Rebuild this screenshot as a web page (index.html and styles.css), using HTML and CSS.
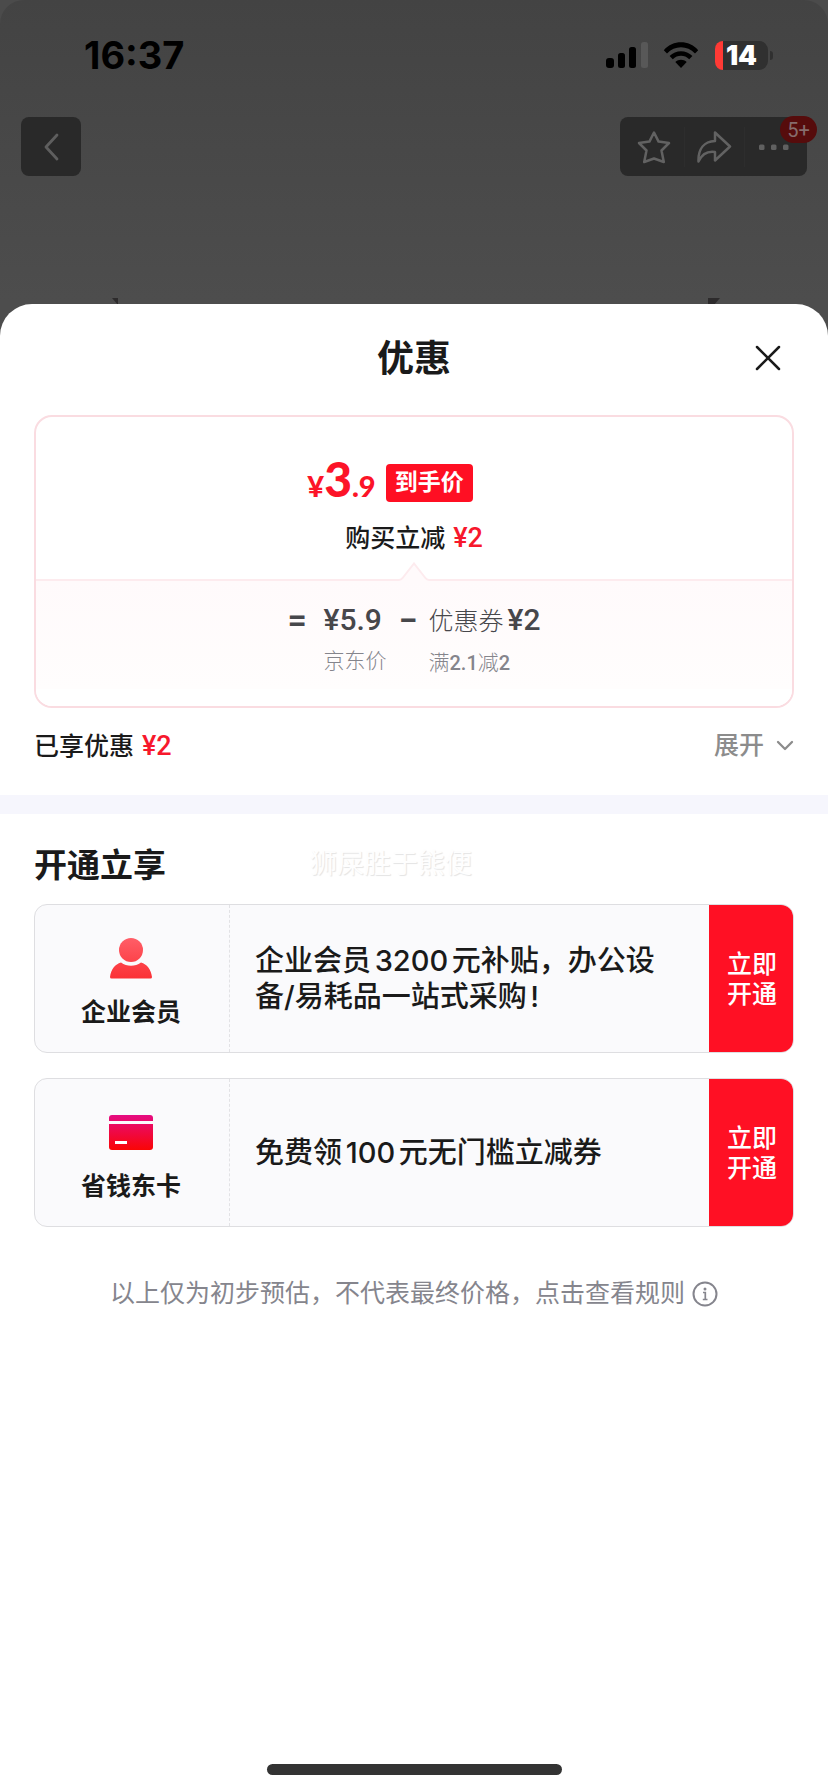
FILE: index.html
```html
<!DOCTYPE html>
<html lang="zh-CN">
<head>
<meta charset="utf-8">
<meta name="viewport" content="width=device-width, initial-scale=1">
<title>优惠</title>
<link rel="stylesheet" href="styles.css">
</head>
<body>
<div class="app">
  <header class="backdrop">
    <div class="status">
      <time class="clock">16:37</time>
      <div class="indicators">
        <svg class="signal" width="42" height="28" viewBox="0 0 42 28" aria-hidden="true">
          <rect x="0" y="17" width="8" height="10" rx="3"/>
          <rect x="12" y="12" width="7" height="15" rx="2.5"/>
          <rect x="23" y="6" width="7" height="21" rx="2.5"/>
          <rect x="35" y="1" width="7" height="26" rx="2.5" fill="#585858"/>
        </svg>
        <svg class="wifi" width="36" height="28" viewBox="0 0 36 28" aria-hidden="true">
          <path d="M0.800 9.200C10-1.400 26-1.400 35.200 9.200L32 12.400C24.400 4.200 11.600 4.200 4 12.400Z"/>
          <path d="M6.600 15C12.800 8.500 23.200 8.500 29.400 15L26.200 18.200C21.600 13.700 14.400 13.700 9.800 18.200Z"/>
          <path d="M12.300 21C15.500 18 20.500 18 23.700 21L18 27Z"/>
        </svg>
        <div class="battery"><span class="charge"></span><span class="level">14</span></div>
      </div>
    </div>
    <nav class="tools">
      <button class="back" aria-label="返回">
        <svg width="16" height="28" viewBox="0 0 16 28"><path d="M14 2 3 14 14 26" fill="none" stroke="#5e5e5e" stroke-width="2.800" stroke-linecap="round" stroke-linejoin="round"/></svg>
      </button>
      <div class="actions">
        <button aria-label="收藏">
          <svg width="36" height="36" viewBox="0 0 36 36"><path d="M18 3.500 22.600 12.600 33 14 25.500 21.500 27.800 33 18 29.500 8.200 33 10.500 21.500 3 14 13.400 12.600Z"/></svg>
        </button>
        <button aria-label="分享">
          <svg width="36" height="36" viewBox="0 0 36 36"><path d="M18 3.500 33 17.500 18 31.500V23C11 22 5 25 1.500 32.500 1 20 7 12.500 18 12Z"/></svg>
        </button>
        <button aria-label="更多">
          <svg width="36" height="36" viewBox="0 0 36 36"><g class="dots"><rect x="2" y="15.500" width="5.500" height="5.500" rx="1.500"/><rect x="14" y="15.500" width="5.500" height="5.500" rx="1.500"/><rect x="26" y="15.500" width="5.500" height="5.500" rx="1.500"/></g></svg>
          <span class="count">5+</span>
        </button>
      </div>
    </nav>
    <div class="peek" aria-hidden="true">
      <svg width="8" height="7" viewBox="0 0 8 7"><path d="M0 0H6V7Z"/></svg>
      <svg width="12" height="7" viewBox="0 0 12 7"><path d="M0 0H12L6 7H0Z"/></svg>
    </div>
  </header>

  <main class="sheet">
    <div class="sheet-head">
      <h1>优惠</h1>
      <button class="close" aria-label="关闭">
        <svg width="28" height="28" viewBox="0 0 28 28"><path d="M3 3 25 25M25 3 3 25" stroke="#1a1a1a" stroke-width="2.500" stroke-linecap="round"/></svg>
      </button>
    </div>

    <section class="price-card">
      <div class="final">
        <div class="final-line">
          <span class="amount"><small>¥</small>3<small>.9</small></span>
          <span class="tag">到手价</span>
        </div>
        <p class="label">购买立减<b>¥2</b></p>
      </div>
      <div class="formula">
        <svg class="notch" width="30" height="19" viewBox="0 0 30 19" aria-hidden="true"><path d="M0 19V18C2 18 3 17 4 15.500L15 1.500 26 15.500C27 17 28 18 30 18V19Z" fill="#fffafb"/><path d="M0 18C2 18 3 17 4 15.500L15 1.500 26 15.500C27 17 28 18 30 18" fill="none" stroke="#fdebee" stroke-width="2"/></svg>
        <span class="sign">=</span>
        <div class="term"><span class="value">¥5.9</span><span class="hint">京东价</span></div>
        <span class="sign">−</span>
        <div class="term"><span class="value"><i>优惠券</i>¥2</span><span class="hint">满<b>2.1</b>减<b>2</b></span></div>
      </div>
    </section>

    <div class="summary">
      <p class="label">已享优惠<b>¥2</b></p>
      <button class="expand">展开
        <svg width="18" height="12" viewBox="0 0 18 12"><path d="M2 2 9 9 16 2" fill="none" stroke="#8c8c8c" stroke-width="2.300" stroke-linecap="round" stroke-linejoin="round"/></svg>
      </button>
    </div>

    <section class="offers">
      <div class="offers-head">
        <h2>开通立享</h2>
        <span class="watermark">狮屎胜于熊便</span>
      </div>
      <article class="offer">
        <div class="brand">
          <svg width="44" height="42" viewBox="0 0 44 42" aria-hidden="true">
            <defs><linearGradient id="person" x1="0" y1="0" x2="0" y2="42" gradientUnits="userSpaceOnUse"><stop offset="0" stop-color="#ff5f69"/><stop offset="1" stop-color="#fb3035"/></linearGradient></defs>
            <g fill="url(#person)"><circle cx="22" cy="13" r="12"/><path d="M12 25.500C18 29.800 26 29.800 32 25.500 38 27.500 42 32 43 40Q43 41.500 41.500 41.500H2.500Q1 41.500 1 40C2 32 6 27.500 12 25.500Z"/></g>
          </svg>
          <h3>企业会员</h3>
        </div>
        <p class="pitch">企业会员3200元补贴，办公设备/易耗品一站式采购!</p>
        <button class="join">立即开通</button>
      </article>
      <article class="offer">
        <div class="brand">
          <svg width="44" height="42" viewBox="0 0 44 42" aria-hidden="true">
            <defs><linearGradient id="card" x1="0" y1="4" x2="0" y2="39" gradientUnits="userSpaceOnUse"><stop offset="0" stop-color="#e50c82"/><stop offset="1" stop-color="#fa0505"/></linearGradient></defs>
            <g fill="url(#card)"><path d="M0 10V7Q0 4 3 4H41Q44 4 44 7V10Z"/><path d="M0 13H44V36Q44 39 41 39H3Q0 39 0 36Z"/></g><rect x="6" y="30" width="12" height="3" fill="#fff"/>
          </svg>
          <h3>省钱东卡</h3>
        </div>
        <p class="pitch">免费领100元无门槛立减券</p>
        <button class="join">立即开通</button>
      </article>
    </section>

    <a class="rules" href="#">以上仅为初步预估，不代表最终价格，点击查看规则
      <svg width="26" height="26" viewBox="0 0 26 26" aria-hidden="true"><circle cx="13" cy="13" r="11.500" fill="none" stroke="#85858d" stroke-width="2"/><circle cx="13" cy="8" r="1.500" fill="#85858d"/><path d="M11 11.500H13.300V18.500M10.800 18.500H15.500" fill="none" stroke="#85858d" stroke-width="1.700"/></svg>
    </a>
    <div class="home-bar"></div>
  </main>
</div>
</body>
</html>
```
FILE: styles.css
```css
* { box-sizing: border-box; }
body, h1, h2, h3, p { margin: 0; }
body {
  background: #4b4b4b;
  color: #1a1a1a;
  font-family: Roboto, "Noto Sans CJK SC", sans-serif;
}
button {
  padding: 0;
  border: 0;
  background: none;
  color: inherit;
  font: inherit;
}
svg { display: block; flex: none; }
.app { display: flex; flex-direction: column; min-height: 100vh; }

.backdrop {
  display: flex;
  flex-direction: column;
  height: 336px;
  padding-top: 32px;
  border-radius: 24px 24px 0 0;
  background: linear-gradient(#434343, #4d4d4d 300px);
}
.status {
  display: flex;
  justify-content: space-between;
  align-items: center;
  height: 46px;
  padding: 0 55px 0 84px;
}
.clock { color: #000; font: 700 38px/46px Inter, sans-serif; }
.indicators { display: flex; align-items: center; gap: 15px; }
.battery {
  position: relative;
  display: flex;
  align-items: center;
  justify-content: center;
  width: 53px;
  height: 29px;
  margin: 0 5px 0 1px;
  border-radius: 9px;
  background: #303030;
}
.battery::after {
  content: "";
  position: absolute;
  right: -5px;
  top: 10px;
  width: 3px;
  height: 9px;
  border-radius: 0 3px 3px 0;
  background: #303030;
}
.charge {
  position: absolute;
  left: 0;
  top: 0;
  width: 8px;
  height: 29px;
  border-radius: 8px 0 0 8px;
  background: #ff3a35;
}
.level { color: #fff; font: 900 27px/29px Inter, sans-serif; }

.tools {
  display: flex;
  justify-content: space-between;
  margin-top: 39px;
  padding: 0 21px;
}
.back, .actions { height: 59px; border-radius: 8px; background: #292929; }
.back { display: grid; place-items: center; width: 60px; }
.actions { display: flex; align-items: center; width: 187px; padding-left: 4px; }
.actions button {
  position: relative;
  display: grid;
  place-items: center;
  width: 60px;
  height: 40px;
}
.actions button + button { border-left: 1px solid #2d2d2d; }
.actions path { fill: none; stroke: #626262; stroke-width: 2.5; stroke-linejoin: round; }
.dots { fill: #606060; }
.count {
  position: absolute;
  right: -13px;
  top: -11px;
  width: 37px;
  height: 27px;
  border-radius: 14px;
  background: #560c0c;
  color: #866c6c;
  font: 400 20px/28px Roboto, sans-serif;
  text-align: center;
}
.peek {
  display: flex;
  justify-content: space-between;
  margin-top: 122px;
  padding: 0 108px 0 112px;
  fill: #2d2b2c;
}

.sheet {
  position: relative;
  display: flex;
  flex: 1;
  flex-direction: column;
  margin-top: -32px;
  border-radius: 32px 32px 0 0;
  background: #fff;
}
.sheet-head {
  display: grid;
  grid-template-columns: 1fr auto 1fr;
  align-items: center;
  height: 111px;
  padding: 0 46px 0;
}
h1 { grid-column: 2; font-size: 37px; line-height: 48px; font-weight: 700; }
.close { justify-self: end; padding-bottom: 4px; }

.price-card {
  margin: 0 34px;
  border: 2px solid #fadce1;
  border-radius: 18px;
  overflow: hidden;
}
.final {
  display: flex;
  flex-direction: column;
  align-items: center;
  gap: 15px;
  height: 162px;
  padding-top: 42px;
}
.final-line {
  display: flex;
  align-items: center;
  gap: 10px;
  margin-right: 48px;
}
.amount { color: #fc1428; font: 900 48px/40px Lato, sans-serif; }
.amount small { font-size: 29px; }
.tag {
  padding: 0 9px;
  border-radius: 4px;
  background: #ff0f23;
  color: #fff;
  font-size: 23px;
  line-height: 38px;
  font-weight: 700;
}
.label { font-size: 25px; line-height: 34px; font-weight: 500; }
.label b { margin-left: 8px; color: #f7182c; font-size: 27px; font-weight: 500; }
.formula {
  position: relative;
  display: flex;
  justify-content: center;
  height: 127px;
  padding-top: 20px;
  border-top: 2px solid #fdebee;
  background: linear-gradient(#fffafb, #fffdfd 108px, #fff 108px);
  color: #47474b;
}
.notch { position: absolute; left: calc(50% - 15px); top: -19px; }
.sign { width: 36px; font-size: 34px; line-height: 38px; font-weight: 600; }
.term { display: flex; flex-direction: column; }
.term:last-child { margin-left: -6px; }
.term + .sign { margin-left: 12px; }
.value { font-size: 30px; line-height: 38px; font-weight: 500; }
.value i { margin-right: 4px; font-size: 25px; font-style: normal; font-weight: 300; }
.hint { color: #85858c; font-size: 21px; line-height: 44px; font-weight: 300; }
.hint b { font-size: 20px; font-weight: 500; }

.summary {
  display: flex;
  justify-content: space-between;
  height: 106px;
  padding: 21px 34px 0;
  border-bottom: 19px solid #f6f6fd;
}
.expand {
  display: flex;
  align-items: center;
  gap: 12px;
  height: 34px;
  color: #8c8c8c;
  font-size: 25px;
  line-height: 34px;
  font-weight: 500;
}

.offers { display: flex; flex-direction: column; gap: 25px; padding: 28px 34px 0; }
.offers-head { display: flex; align-items: center; gap: 144px; height: 48px; margin-bottom: -11px; }
h2 { font-size: 33px; line-height: 48px; font-weight: 700; }
.watermark { color: #fefefe; font-size: 27px; line-height: 40px; padding-bottom: 4px; text-shadow: 1px 1px 1px #e4e4e4; }
.offer {
  display: flex;
  min-height: 149px;
  border: 1px solid #dedee1;
  border-radius: 13px;
  background: #fafafc;
  overflow: hidden;
}
.brand {
  display: flex;
  flex: none;
  flex-direction: column;
  align-items: center;
  gap: 16px;
  width: 195px;
  padding: 32px 2px 0 0;
  border-right: 1px dashed #e2e2e5;
}
h3 { font-size: 25px; line-height: 36px; font-weight: 700; }
.pitch {
  flex: 1;
  align-self: center;
  padding: 0 36px 0 25px;
  font-family: Inter, "Noto Sans CJK SC", sans-serif;
  font-size: 29px;
  line-height: 36px;
  font-weight: 500;
  text-autospace: normal;
}
.join {
  flex: none;
  width: 84px;
  padding: 2px 16px 0 18px;
  background: #ff1024;
  color: #fff;
  font-size: 25px;
  line-height: 30px;
  font-weight: 500;
}
.rules {
  display: flex;
  align-items: center;
  justify-content: center;
  gap: 7px;
  margin-top: 49px;
  color: #85858d;
  font-size: 25px;
  line-height: 36px;
  text-decoration: none;
}
.home-bar {
  width: 295px;
  height: 11px;
  margin: auto auto 17px;
  border-radius: 6px;
  background: #333;
}
```
